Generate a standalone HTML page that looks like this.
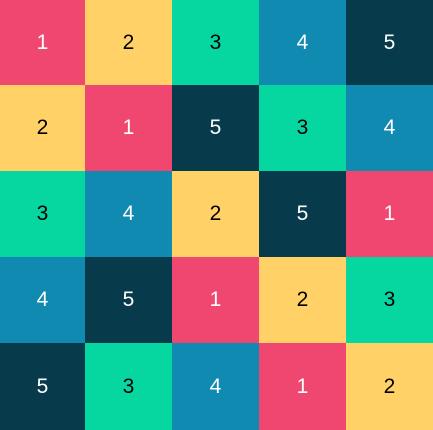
<!DOCTYPE html>
<html><head><style>
html,body{margin:0;padding:0;}
.g{display:grid;grid-template-columns:85px 87px 87px 87px 87px;grid-template-rows:85px 86px 86px 86px 87px;width:433px;height:430px;font-family:"Liberation Sans",sans-serif;font-size:21px;}
.g div{display:flex;align-items:center;justify-content:center;}
.a{background:#EF476F;color:#fff}.b{background:#FFD166;color:#000}.c{background:#06D6A0;color:#000}.d{background:#118AB2;color:#fff}.e{background:#073B4C;color:#fff}
</style></head><body><div class="g">
<div class="a">1</div><div class="b">2</div><div class="c">3</div><div class="d">4</div><div class="e">5</div>
<div class="b">2</div><div class="a">1</div><div class="e">5</div><div class="c">3</div><div class="d">4</div>
<div class="c">3</div><div class="d">4</div><div class="b">2</div><div class="e">5</div><div class="a">1</div>
<div class="d">4</div><div class="e">5</div><div class="a">1</div><div class="b">2</div><div class="c">3</div>
<div class="e">5</div><div class="c">3</div><div class="d">4</div><div class="a">1</div><div class="b">2</div>
</div></body></html>
